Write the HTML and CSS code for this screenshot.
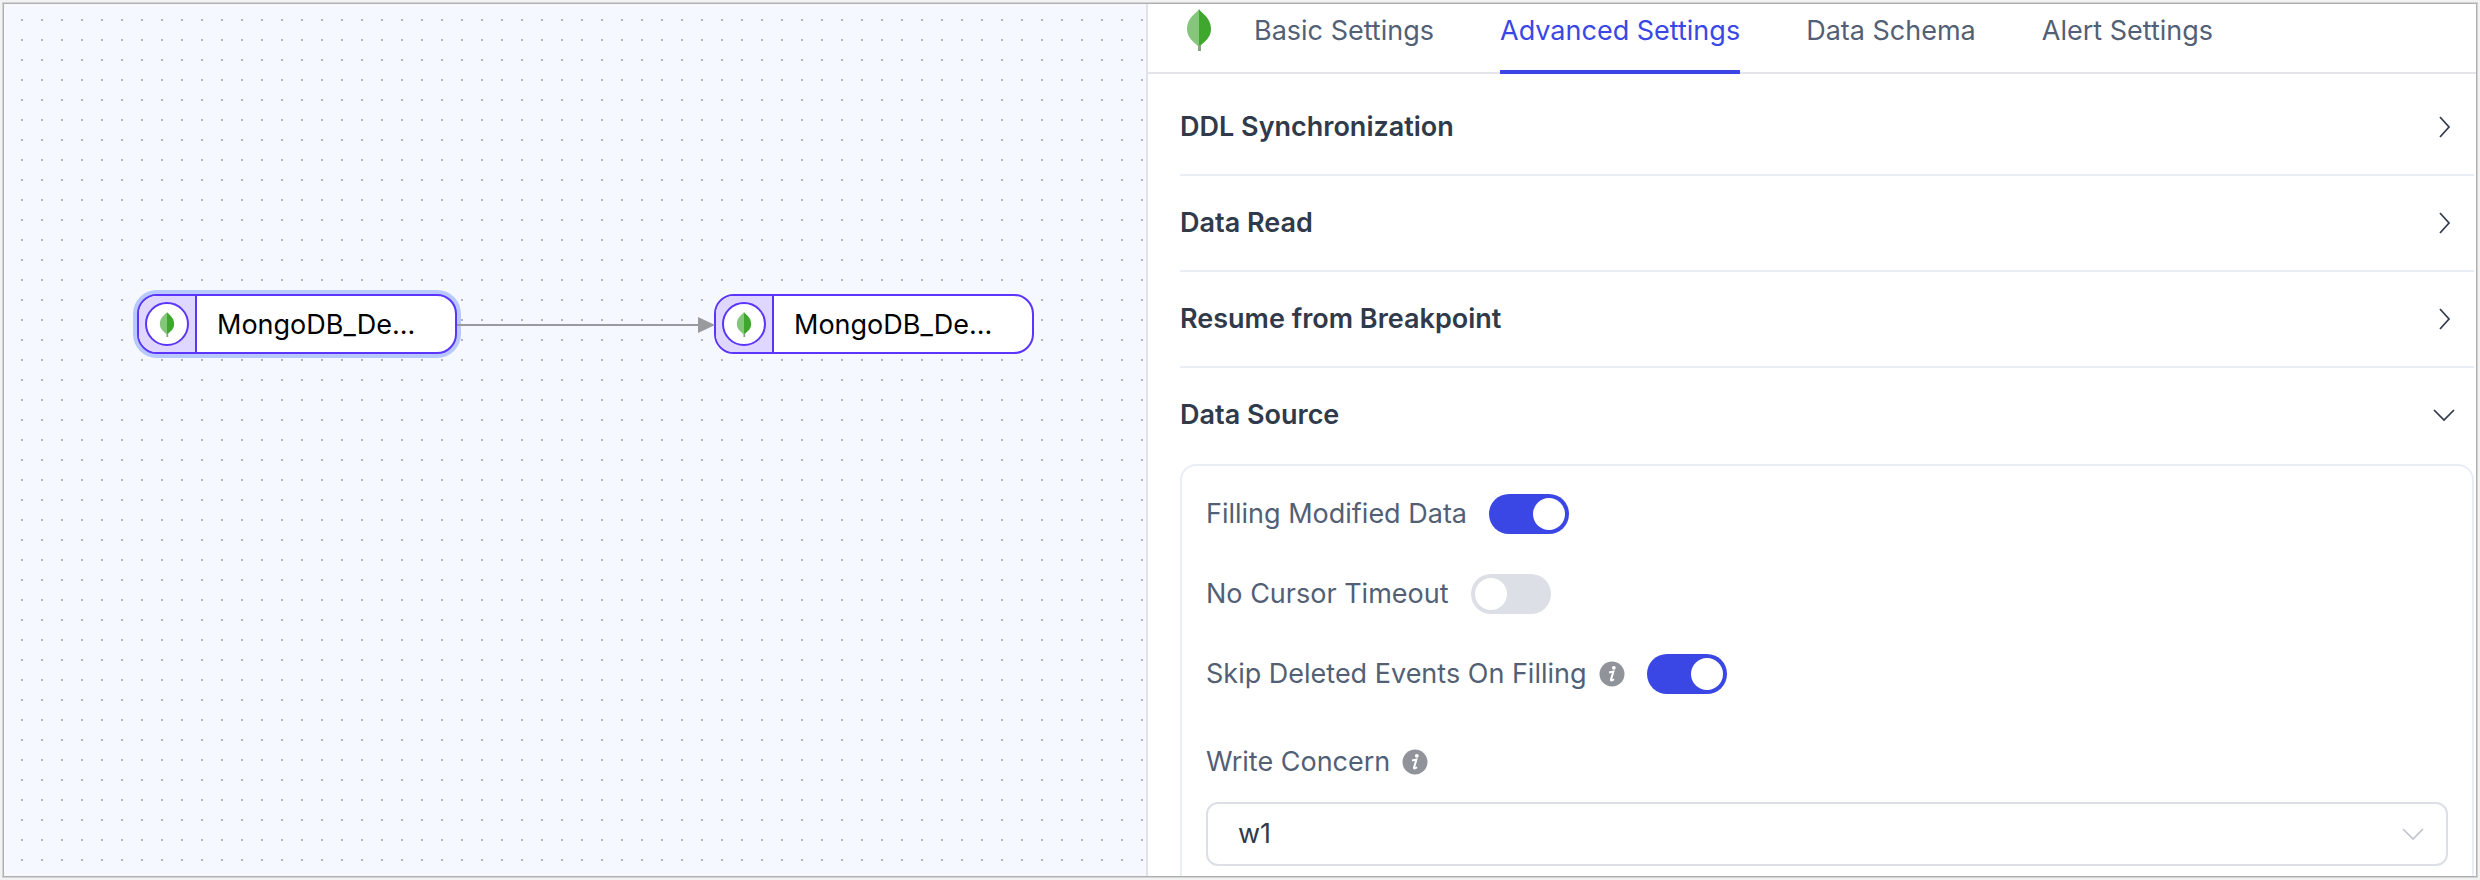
FILE: index.html
```
<!DOCTYPE html>
<html lang="en">
<head>
<meta charset="utf-8">
<title>Pipeline editor</title>
<link rel="stylesheet" href="styles.css">
</head>
<body>
<svg class="defs" aria-hidden="true">
  <symbol id="leaf" viewBox="0 0 26 42">
    <path fill="#3fa72e" d="M13 0C15 4 25 8 25 20C25 29 18 33 14 37L13 37Z"/>
    <path fill="#85c67c" d="M13 0C11 4 1 8 1 20C1 29 8 33 12 37L13 37Z"/>
    <path fill="#7fa97a" d="M12 36h3v6h-3z"/>
  </symbol>
  <symbol id="info" viewBox="0 0 26 26">
    <circle cx="13" cy="13" r="12.5" fill="#909399"/>
    <circle cx="14.8" cy="6.8" r="1.9" fill="#fff"/>
    <path d="M10 11.4L14.4 10.6L12 18.6Q11.6 20.6 15 18.2" fill="none" stroke="#fff" stroke-width="2"/>
  </symbol>
  <symbol id="right" viewBox="0 0 24 24"><path d="M8 2L17 12L8 22" fill="none" stroke="currentColor" stroke-width="1.7"/></symbol>
  <symbol id="down" viewBox="0 0 24 24"><path d="M2 7L12 17L22 7" fill="none" stroke="currentColor" stroke-width="1.7"/></symbol>
</svg>
<div class="window">
  <main class="canvas">
    <div class="node node-source selected">
      <span class="node-icon"><span class="node-ring"><svg class="node-leaf"><use href="#leaf"/></svg></span></span>
      <span class="node-name">MongoDB_De...</span>
    </div>
    <div class="node node-target">
      <span class="node-icon"><span class="node-ring"><svg class="node-leaf"><use href="#leaf"/></svg></span></span>
      <span class="node-name">MongoDB_De...</span>
    </div>
    <svg class="edge" viewBox="0 0 258 16" aria-hidden="true">
      <path d="M0 8H244" stroke="#999a9e" stroke-width="2"/>
      <path d="M241 0L258 8L241 16Z" fill="#999a9e"/>
    </svg>
  </main>
  <aside class="panel">
    <nav class="tabs">
      <svg class="tabs-logo" aria-hidden="true"><use href="#leaf"/></svg>
      <button class="tab" type="button">Basic Settings</button>
      <button class="tab active" type="button">Advanced Settings</button>
      <button class="tab" type="button">Data Schema</button>
      <button class="tab" type="button">Alert Settings</button>
    </nav>
    <div class="sections">
      <button class="section" type="button">DDL Synchronization<svg class="chevron"><use href="#right"/></svg></button>
      <button class="section" type="button">Data Read<svg class="chevron"><use href="#right"/></svg></button>
      <button class="section" type="button">Resume from Breakpoint<svg class="chevron"><use href="#right"/></svg></button>
      <button class="section open" type="button">Data Source<svg class="chevron"><use href="#down"/></svg></button>
      <form class="card">
        <div class="row">
          <label class="label" for="fill">Filling Modified Data</label>
          <input class="switch" id="fill" type="checkbox" role="switch" checked>
        </div>
        <div class="row">
          <label class="label" for="cursor">No Cursor Timeout</label>
          <input class="switch" id="cursor" type="checkbox" role="switch">
        </div>
        <div class="row">
          <label class="label" for="skip">Skip Deleted Events On Filling<svg class="info"><use href="#info"/></svg></label>
          <input class="switch" id="skip" type="checkbox" role="switch" checked>
        </div>
        <div class="field">
          <label class="label" for="concern">Write Concern<svg class="info"><use href="#info"/></svg></label>
          <div class="select-box">
            <select class="select" id="concern"><option>w1</option></select>
            <svg class="select-arrow" aria-hidden="true"><use href="#down"/></svg>
          </div>
        </div>
      </form>
    </div>
  </aside>
</div>
</body>
</html>
```

FILE: styles.css
```
* { box-sizing: border-box; }

body {
  margin: 0;
  height: 100vh;
  padding: 4px;
  background: #f2f2f2;
  font-family: Inter, "Liberation Sans", sans-serif;
  font-size: 27px;
  line-height: 40px;
  color: #535f75;
}

button, select { font: inherit; }

.defs { position: absolute; width: 0; height: 0; }

.window {
  display: grid;
  grid-template-columns: 1142fr 1330fr;
  height: 100%;
  overflow: hidden;
  background: #fff;
  box-shadow: 0 0 0 1px #b0b0b0, 0 0 0 2px #d2d2d2;
}

/* 2px grid dots, one in each 20px tile */
.canvas {
  position: relative;
  overflow: hidden;
  background-color: #f5f8fe;
  background-image: conic-gradient(from 270deg at 2px 2px, #b4b5ba 90deg, transparent 0);
  background-position: 17px 15px;
  background-size: 20px 20px;
}

.node {
  position: absolute;
  top: 290px;
  display: flex;
  width: 320px;
  height: 60px;
  overflow: hidden;
  border: 2px solid #5b35fb;
  border-radius: 20px;
  background: #fff;
  color: #000;
}

.node-source { left: 133px; }
.node-target { left: 710px; }
.selected { box-shadow: 0 0 0 4px #b8c9ff; }

.node-icon {
  display: flex;
  align-items: center;
  justify-content: center;
  width: 58px;
  border-right: 2px solid #5b35fb;
  background: #dfd7ff;
}

.node-ring {
  display: flex;
  align-items: center;
  justify-content: center;
  width: 44px;
  height: 44px;
  border: 2px solid #5b35fb;
  border-radius: 50%;
  background: #fff;
}

.node-leaf { width: 16px; height: 25px; }
.node-name { flex: 1; padding-left: 20px; line-height: 58px; }

.edge { position: absolute; top: 313px; left: 453px; width: 258px; height: 16px; }

.panel { border-left: 2px solid #dfe2ea; overflow: hidden; }

.tabs {
  display: flex;
  gap: 66px;
  height: 70px;
  padding-left: 38px;
  border-bottom: 2px solid #e4e5eb;
}

.tabs-logo { width: 26px; height: 42px; margin: 5px -24px 0 0; }

.tab {
  height: 70px;
  padding: 0 0 12px;
  border: 0;
  border-bottom: 4px solid transparent;
  background: none;
  color: inherit;
}

.tab.active { color: #3b47e5; border-color: #3b47e5; }

.sections { padding: 6px 2px 0 32px; }

.section {
  display: flex;
  align-items: center;
  justify-content: space-between;
  width: 100%;
  height: 96px;
  padding: 0 18px 0 0;
  border: 0;
  border-bottom: 2px solid #e9edf5;
  background: none;
  color: #303a4b;
  font-weight: 600;
}

.section.open { border-color: transparent; }
.chevron { width: 24px; height: 24px; }

.card {
  height: 440px;
  padding: 28px 24px;
  border: 2px solid #e9edf5;
  border-radius: 16px;
}

.row { display: flex; align-items: center; gap: 22px; height: 40px; margin-bottom: 40px; }
.label { display: flex; align-items: center; gap: 12px; }
.info { width: 26px; height: 26px; }

.switch {
  appearance: none;
  width: 80px;
  height: 40px;
  margin: 0;
  padding: 4px;
  border-radius: 20px;
  background: #dcdfe6;
}

.switch::before {
  content: "";
  display: block;
  width: 32px;
  height: 32px;
  border-radius: 50%;
  background: #fff;
}

.switch:checked { background: #3b47e5; }
.switch:checked::before { margin-left: auto; }

.field { display: grid; gap: 20px; padding-top: 8px; }
.select-box { position: relative; }

.select {
  appearance: none;
  display: block;
  width: 100%;
  height: 64px;
  padding: 0 30px;
  border: 2px solid #dcdfe6;
  border-radius: 12px;
  background: #fff;
  color: #303a4b;
}

.select-arrow {
  position: absolute;
  top: 20px;
  right: 23px;
  width: 24px;
  height: 24px;
  color: #c0c4cc;
  pointer-events: none;
}
```
